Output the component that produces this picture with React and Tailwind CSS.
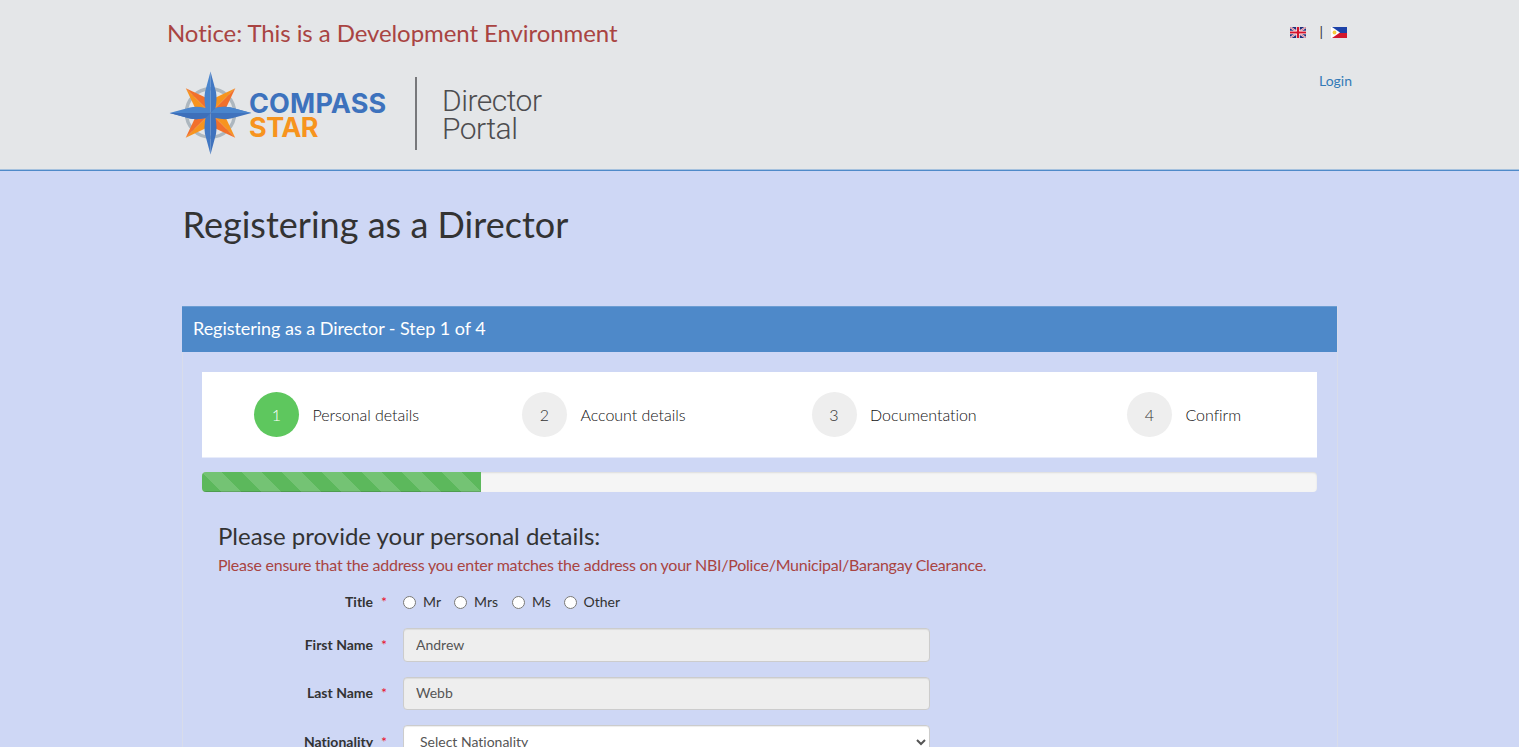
const steps = [
  { n: 1, label: "Personal details", cell: "w-[268px] pl-[52px]", active: true },
  { n: 2, label: "Account details", cell: "w-[290px] pl-[52px]" },
  { n: 3, label: "Documentation", cell: "w-[315px] pl-[51.5px]" },
  { n: 4, label: "Confirm", cell: "w-[242px] pl-[52px] [font-variant-ligatures:normal]" },
];

const titles = [
  { name: "Mr", box: "w-[51px]" },
  { name: "Mrs", box: "w-[58px]" },
  { name: "Ms", box: "w-[51.5px]" },
  { name: "Other", box: "w-[70px]" },
];

function Compass() {
  return (
    <svg width="83" height="86" viewBox="169 70 83 86" className="block">
      <circle cx="210.5" cy="113" r="24.2" fill="none" stroke="#adb7bf" strokeWidth="3.4" />
      {[0, 90, 180, 270].map((a) => (
        <g key={a} transform={`rotate(${a} 210.5 113)`}>
          <path d="M210.5 113 L235.3 88.3 L215.8 97.5 Z" fill="#f7941e" />
          <path d="M210.5 113 L235.3 88.3 L226 108 Z" fill="#f2702b" />
        </g>
      ))}
      <path d="M210.5 71.5 L205 92 Q203.8 99 205.5 108 Q197 106 190 107.5 L169.6 113 H210.5 Z" fill="#4a85cd" />
      <path d="M210.5 71.5 L216 92 Q217.2 99 215.5 108 Q224 106 231 107.5 L251.4 113 H210.5 Z" fill="#4278c3" />
      <path d="M210.5 154.5 L216 134 Q217.2 127 215.5 118 Q224 120 231 118.5 L251.4 113 H210.5 Z" fill="#3f72bd" />
      <path d="M210.5 154.5 L205 134 Q203.8 127 205.5 118 Q197 120 190 118.5 L169.6 113 H210.5 Z" fill="#4278c3" />
      <path d="M210.5 113 L215.5 108 Q224 106 231 107.5 L251.4 113 Z" fill="#4a85cd" />
      <path d="M210.5 113 L205.5 118 Q197 120 190 118.5 L169.6 113 Z" fill="#3d6fba" />
    </svg>
  );
}

function Logo() {
  return (
    <div className="flex h-[86px] items-start">
      <div className="ml-[2px]">
        <Compass />
      </div>
      <div className="-ml-[3px] flex w-[166px] flex-col pt-[22px] text-[27px] leading-[24px] font-bold font-[Inter,sans-serif]">
        <span className="tracking-[0.15px] text-[#3d72bd]">COMPASS</span>
        <span className="tracking-[-0.55px] text-[#f7941e]">STAR</span>
      </div>
      <div className="mt-[7px] h-[73px] w-[1.5px] bg-[#77787b]" />
      <div className="ml-[25.5px] flex flex-col pt-[17px] text-[30px] leading-[27.5px] font-light text-[#4d4d4f] font-[Roboto,sans-serif]">
        <span className="tracking-[-0.5px]">Director</span>
        <span className="tracking-[-0.5px]">Portal</span>
      </div>
    </div>
  );
}

function UkFlag() {
  return (
    <svg width="16" height="11" viewBox="0 0 16 11" className="block">
      <rect width="16" height="11" fill="#1f2f7a" />
      <path d="M0 0 L16 11 M16 0 L0 11" stroke="#f0dfe6" strokeWidth="1.9" />
      <path d="M0 0 L16 11 M16 0 L0 11" stroke="#d8304a" strokeWidth="0.6" />
      <path d="M8 0 V11 M0 5.5 H16" stroke="#fff" strokeWidth="3.6" />
      <path d="M8 0 V11 M0 5.5 H16" stroke="#d5142c" strokeWidth="2.2" />
    </svg>
  );
}

function PhFlag() {
  return (
    <svg width="16" height="11" viewBox="0 0 16 11" className="block">
      <rect width="16" height="6" fill="#1c42a8" />
      <rect y="6" width="16" height="5" fill="#d3182d" />
      <path d="M0 0 H1 L9 5.5 L1 11 H0 Z" fill="#fff" />
      <circle cx="3.5" cy="5.5" r="1.9" fill="#f5cf3d" />
    </svg>
  );
}

function Label({ children }) {
  return (
    <label className="w-[169px] shrink-0 text-right text-[14px] leading-5 font-bold text-[#333]">
      {children}
      <span className="ml-2 font-normal text-[#e8112d]">*</span>
    </label>
  );
}

function Field({ label, value }) {
  return (
    <div className="mb-[15px] flex items-center">
      <Label>{label}</Label>
      <input
        readOnly
        value={value}
        className="ml-[16px] h-[33.5px] w-[527px] rounded-[4px] border border-[#ccc] bg-[#eee] px-3 pb-[1px] text-[14px] text-[#555] shadow-[inset_0_1px_1px_rgba(0,0,0,0.075)]"
      />
    </div>
  );
}

export default function App() {
  return (
    <div className="h-[747px] overflow-hidden bg-[#ced7f5] font-[Lato,sans-serif] text-[#333] [font-variant-ligatures:none]">
      <header className="h-[171px] border-b border-[#4f8ac9] bg-[#e4e6e8] shadow-[inset_0_-1px_0_#a5c1de]">
        <div className="mx-auto flex w-[1185px] justify-between">
          <div className="pt-[18px]">
            <h3 className="text-[24px] leading-[30px] tracking-[-0.08px] text-[#a94442]">Notice: This is a Development Environment</h3>
            <div className="mt-[22px]">
              <Logo />
            </div>
          </div>
          <div className="flex flex-col items-end pt-[22px]">
            <div className="mr-[5px] flex h-5 items-center">
              <UkFlag />
              <span className="mr-[8px] ml-[13px] text-[14px] leading-5">|</span>
              <PhFlag />
            </div>
            <a className="mt-[29px] text-[14px] leading-5 text-[#337ab7]">Login</a>
          </div>
        </div>
      </header>

      <main className="mx-auto w-[1155px]">
        <h1 className="pt-[31px] pl-[0.5px] text-[36px] leading-[44px] tracking-[0.02px]">Registering as a Director</h1>

        <section className="mt-[60px] h-[600px] w-[1156px] border border-t-0 border-[#d8dcea]">
          <div className="-ml-px h-[46px] border-t border-[#6c9dd2] bg-[#4e89c9] pl-[11px] text-[18px] leading-[43px] tracking-[-0.04px] text-white">
            Registering as a Director - Step 1 of 4
          </div>

          <div className="pt-[20px] pr-[20px] pl-[19px]">
            <div className="flex h-[86px] items-center border-b border-[#e8ecfa] bg-white">
              {steps.map((s) => (
                <div key={s.n} className={`flex items-center ${s.cell}`}>
                  <span
                    className={`flex size-[45px] items-center justify-center rounded-full text-[16px] font-light ${s.active ? "bg-[#5ec75e] text-white" : "bg-[#eee] text-[#333]"}`}
                  >
                    {s.n}
                  </span>
                  <span className="ml-[13.5px] text-[16px] font-light tracking-[-0.04px] text-[#111]">{s.label}</span>
                </div>
              ))}
            </div>

            <div className="mt-[14px] h-5 overflow-hidden rounded-[4px] bg-[#f5f5f5] shadow-[inset_0_1px_2px_rgba(0,0,0,0.1)]">
              <div className="h-5 w-1/4 bg-[#5cb85c] [background-image:linear-gradient(45deg,rgba(255,255,255,.15)_25%,transparent_25%,transparent_50%,rgba(255,255,255,.15)_50%,rgba(255,255,255,.15)_75%,transparent_75%,transparent)] [background-size:40px_40px] shadow-[inset_0_-1px_0_rgba(0,0,0,0.15)]" />
            </div>

            <div className="px-4 pt-[29px]">
              <h3 className="text-[24px] leading-[29px]">Please provide your personal details:</h3>
              <p className="mt-px text-[16px] leading-[28px] tracking-[-0.24px] text-[#a94442]">
                Please ensure that the address you enter matches the address on your NBI/Police/Municipal/Barangay Clearance.
              </p>

              <div className="mt-[13px] mb-[16px] flex items-center">
                <Label>Title</Label>
                <div className="ml-[16px] flex">
                  {titles.map((t) => (
                    <label key={t.name} className={`flex items-center text-[14px] leading-5 ${t.box}`}>
                      <input type="radio" name="title" className="mr-[7px] size-[13px]" />
                      {t.name}
                    </label>
                  ))}
                </div>
              </div>

              <Field label="First Name" value="Andrew" />
              <Field label="Last Name" value="Webb" />
              <div className="flex items-center">
                <Label>Nationality</Label>
                <select className="ml-[16px] h-[33.5px] w-[527px] rounded-[4px] border border-[#ccc] bg-white px-3 text-[14px] text-[#555] shadow-[inset_0_1px_1px_rgba(0,0,0,0.075)]">
                  <option>Select Nationality</option>
                </select>
              </div>
            </div>
          </div>
        </section>
      </main>
    </div>
  );
}
